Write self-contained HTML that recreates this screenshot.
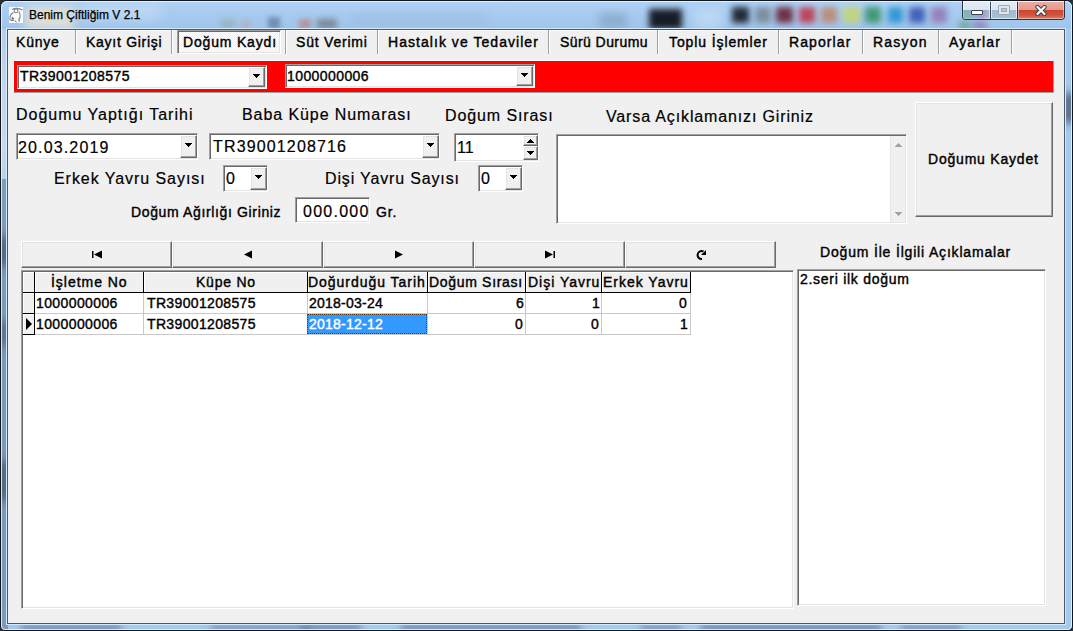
<!DOCTYPE html>
<html><head><meta charset="utf-8">
<style>
*{margin:0;padding:0;box-sizing:border-box}
html,body{width:1073px;height:631px;overflow:hidden;background:#2a3038}
body{position:relative;font-family:"Liberation Sans",sans-serif;color:#000}
.a{position:absolute}
.b14{font-size:14px;line-height:14px;white-space:nowrap;font-weight:normal;-webkit-text-stroke:.4px currentColor}
.r16{font-size:16px;line-height:16px;letter-spacing:1px;white-space:nowrap;-webkit-text-stroke:.2px #000}
.sunk{background:#fff;border:1px solid;border-color:#a0a0a0 #fff #fff #a0a0a0;box-shadow:inset 1px 1px 0 #696969,inset -1px -1px 0 #e3e3e3}
.btn{background:#f0f0f0;border:1px solid;border-color:#fff #696969 #696969 #fff;box-shadow:inset -1px -1px 0 #a0a0a0,inset 1px 1px 0 #e3e3e3}
.sep{width:2px;height:24px;top:30px;border-left:1px solid #a0a0a0;border-right:1px solid #fff}
</style></head><body>

<div class="a" style="left:0;top:0;width:1073px;height:631px;border-radius:7px 7px 5px 5px;overflow:hidden;background:#a6c8ec;border:1px solid #10161e">
<div class="a" style="left:0;top:0;width:1071px;height:28px;background:linear-gradient(#b0d2f4 0,#aacdf2 30%,#9fc4ea 100%)"></div>
<div class="a" style="left:0;top:176px;width:7px;height:460px;background:linear-gradient(#7e9cbc,#7a98b8 50%,#7d9aba)"></div>
<div class="a" style="left:0;top:28px;width:7px;height:150px;background:linear-gradient(#b4cfe8,#c4d6e8 40%,#c8d8e8 80%,#b8d0ea)"></div>
<div class="a" style="left:0;top:235px;width:7px;height:30px;background:#3a4656;filter:blur(5px)"></div>
<div class="a" style="left:0;top:320px;width:7px;height:25px;background:#4a5a6c;filter:blur(5px)"></div>
<div class="a" style="left:0;top:460px;width:7px;height:40px;background:#3a4656;filter:blur(5px)"></div>
<div class="a" style="left:20px;top:624px;width:100px;height:6px;background:#5c7896;filter:blur(3px);opacity:.8"></div>
<div class="a" style="left:210px;top:624px;width:100px;height:6px;background:#6a86a4;filter:blur(3px);opacity:.8"></div>
<div class="a" style="left:300px;top:624px;width:60px;height:6px;background:#5c7896;filter:blur(3px);opacity:.8"></div>
<div class="a" style="left:400px;top:624px;width:180px;height:6px;background:#5a7492;filter:blur(3px);opacity:.8"></div>
<div class="a" style="left:640px;top:624px;width:40px;height:6px;background:#6a86a4;filter:blur(3px);opacity:.8"></div>
<div class="a" style="left:700px;top:624px;width:180px;height:6px;background:#56708e;filter:blur(3px);opacity:.8"></div>
<div class="a" style="left:900px;top:624px;width:60px;height:6px;background:#6a86a4;filter:blur(3px);opacity:.8"></div>
<div class="a" style="left:1064px;top:92px;width:8px;height:30px;background:#3a4656;filter:blur(4px)"></div>
<div class="a" style="left:24px;top:5px;width:50px;height:24px;background:#e0e0d6;filter:blur(5px);opacity:0.95"></div>
<div class="a" style="left:80px;top:4px;width:80px;height:14px;background:#c8def4;filter:blur(6px);opacity:0.7"></div>
<div class="a" style="left:220px;top:18px;width:14px;height:10px;background:#90a8a0;filter:blur(3px);opacity:0.6"></div>
<div class="a" style="left:240px;top:20px;width:10px;height:8px;background:#c09a9a;filter:blur(3px);opacity:0.5"></div>
<div class="a" style="left:267px;top:16px;width:12px;height:12px;background:#48607e;filter:blur(2.5px);opacity:0.55"></div>
<div class="a" style="left:298px;top:18px;width:12px;height:10px;background:#c06850;filter:blur(2.5px);opacity:0.5"></div>
<div class="a" style="left:316px;top:18px;width:20px;height:10px;background:#5a5650;filter:blur(3px);opacity:0.55"></div>
<div class="a" style="left:350px;top:12px;width:136px;height:14px;background:#9cbce0;filter:blur(3px);opacity:0.5"></div>
<div class="a" style="left:598px;top:12px;width:28px;height:16px;background:#86a4c4;filter:blur(4px);opacity:0.7"></div>
<div class="a" style="left:648px;top:8px;width:33px;height:20px;background:#10141c;filter:blur(3px);opacity:0.95"></div>
<div class="a" style="left:693px;top:8px;width:28px;height:20px;background:#c8e0f8;filter:blur(4px);opacity:0.6"></div>
<div class="a" style="left:731px;top:6px;width:17px;height:16px;background:#141a24;filter:blur(3px);opacity:0.9"></div>
<div class="a" style="left:754px;top:6px;width:16px;height:16px;background:#7a8898;filter:blur(3px);opacity:0.9"></div>
<div class="a" style="left:775px;top:6px;width:17px;height:16px;background:#6a2030;filter:blur(3px);opacity:0.9"></div>
<div class="a" style="left:798px;top:6px;width:16px;height:16px;background:#c03040;filter:blur(3px);opacity:0.85"></div>
<div class="a" style="left:820px;top:6px;width:16px;height:16px;background:#c08060;filter:blur(3px);opacity:0.8"></div>
<div class="a" style="left:842px;top:6px;width:17px;height:16px;background:#c8d860;filter:blur(3px);opacity:0.8"></div>
<div class="a" style="left:864px;top:6px;width:16px;height:16px;background:#309060;filter:blur(3px);opacity:0.85"></div>
<div class="a" style="left:887px;top:6px;width:15px;height:16px;background:#2090d0;filter:blur(3px);opacity:0.85"></div>
<div class="a" style="left:908px;top:6px;width:16px;height:16px;background:#3050b0;filter:blur(3px);opacity:0.85"></div>
<div class="a" style="left:930px;top:6px;width:16px;height:16px;background:#9070b0;filter:blur(3px);opacity:0.8"></div>
<div class="a" style="left:958px;top:20px;width:12px;height:10px;background:#60a080;filter:blur(3px);opacity:0.7"></div>
<div class="a" style="left:972px;top:20px;width:14px;height:10px;background:#9070b0;filter:blur(3px);opacity:0.7"></div>
<div class="a" style="left:0;top:0;width:1071px;height:629px;border-radius:6px 6px 4px 4px;border:1px solid rgba(235,246,255,.85)"></div>
</div>
<div class="a" style="left:6px;top:28px;width:1060px;height:597px;border:1px solid #d6eaff"></div>
<div class="a" style="left:7px;top:29px;width:1058px;height:595px;background:#f0f0f0;border:1px solid #4a5868"></div>
<div class="a" style="left:8px;top:30px;width:1056px;height:1px;background:#fafafa"></div>
<svg class="a" style="left:9px;top:7px" width="14" height="16" viewBox="0 0 14 16">
<rect width="14" height="16" fill="#fbfbfb"/>
<g fill="none" stroke="#858585" stroke-width="1.1">
<path d="M3,2.5 Q8,0 13.5,3"/><circle cx="7" cy="3.8" r="1.9"/>
<path d="M4.5,5.5 Q0.5,7.5 1,12.5 Q2.5,14.5 5,13 M10,4.5 Q12,8 10.5,12 L10,15 M6,13.5 L7.5,15.5"/>
</g><path d="M3,9.5 L5.5,12 L2.5,13 Z" fill="#707070"/><path d="M9,11 L11,12.5 L10,15 Z" fill="#9a9a9a"/></svg>
<div class="a" style="left:29px;top:9px;font-size:12px;line-height:12px;color:#000;white-space:nowrap;-webkit-text-stroke:.25px #000">Benim Çiftliğim V 2.1</div>
<div class="a" style="left:962px;top:0;width:103px;height:20px;border:1px solid #2a3646;border-top:none;border-radius:0 0 4px 4px;overflow:hidden">
<div class="a" style="left:0;top:0;width:27px;height:19px;background:linear-gradient(#e6eef6 0,#dae5f0 50%,#a7bad0 52%,#aec1d6 100%);box-shadow:inset 0 0 0 1px rgba(255,255,255,.6)"></div>
<div class="a" style="left:0;top:10px;width:27px;height:9px;background:linear-gradient(90deg,rgba(90,170,120,.45),rgba(80,140,200,.3) 45%,rgba(160,110,190,.45) 70%,rgba(0,0,0,0))"></div>
<div class="a" style="left:27px;top:0;width:1px;height:19px;background:#3a4656"></div>
<div class="a" style="left:28px;top:0;width:26px;height:19px;background:linear-gradient(#e6eef6 0,#dae5f0 50%,#a3b7cd 52%,#abbfd5 100%);box-shadow:inset 0 0 0 1px rgba(255,255,255,.6)"></div>
<div class="a" style="left:54px;top:0;width:1px;height:19px;background:#5a2418"></div>
<div class="a" style="left:55px;top:0;width:46px;height:19px;background:linear-gradient(#eeb0a6 0,#e49a8e 50%,#c9452f 52%,#d0553e 80%,#d98068 100%);box-shadow:inset 0 0 0 1px rgba(255,230,225,.5)"></div>
<div class="a" style="left:8px;top:10px;width:12px;height:5px;background:#fff;border:1px solid #3a4252;border-radius:1px"></div>
<div class="a" style="left:35px;top:5px;width:12px;height:10px;border:1px solid #9ca8b8;border-radius:1px;box-shadow:inset 0 0 0 2px #dfe5ec"></div>
<div class="a" style="left:38px;top:8px;width:6px;height:4px;border:1px solid #9ca8b8;background:#b4c4d6"></div>
<svg class="a" style="left:72px;top:5px" width="12" height="11" viewBox="0 0 12 11"><path d="M2.5,2 L9.5,9 M9.5,2 L2.5,9" stroke="#384050" stroke-width="4.2" stroke-linecap="round"/><path d="M2.5,2 L9.5,9 M9.5,2 L2.5,9" stroke="#fafafa" stroke-width="2.3" stroke-linecap="round"/></svg>
</div>
<div class="a" style="left:955px;top:0;width:110px;height:1px;background:#10161e"></div>
<div class="a" style="left:963px;top:1px;width:101px;height:1px;background:rgba(255,255,255,.75)"></div>
<div class="a sep" style="left:75px"></div>
<div class="a sep" style="left:171px"></div>
<div class="a sep" style="left:285px"></div>
<div class="a sep" style="left:377px"></div>
<div class="a sep" style="left:548px"></div>
<div class="a sep" style="left:657px"></div>
<div class="a sep" style="left:778px"></div>
<div class="a sep" style="left:862px"></div>
<div class="a sep" style="left:938px"></div>
<div class="a sep" style="left:1011px"></div>
<div class="a" style="left:177px;top:30px;width:104px;height:24px;border:1px solid;border-color:#a0a0a0 #fff #fff #a0a0a0;box-shadow:inset 1px 1px 0 #696969,inset -1px -1px 0 #e3e3e3;background:repeating-conic-gradient(#fff 0 25%,#f0f0f0 0 50%) 0 0/2px 2px"></div>
<div class="a" style="left:13px;top:60px;width:1041px;height:33px;background:#f00;border:1px solid;border-color:#fff #a0a0a0 #a0a0a0 #fff"></div>
<div class="a sunk" style="left:17px;top:65px;width:250px;height:24px"></div>
<div class="a btn" style="left:248px;top:67px;width:17px;height:20px"></div>
<div class="a" style="left:253px;top:74px;width:7px;height:1px;background:#000"></div>
<div class="a" style="left:254px;top:75px;width:5px;height:1px;background:#000"></div>
<div class="a" style="left:255px;top:76px;width:3px;height:1px;background:#000"></div>
<div class="a" style="left:256px;top:77px;width:1px;height:1px;background:#000"></div>
<div class="a sunk" style="left:285px;top:64px;width:250px;height:24px"></div>
<div class="a btn" style="left:516px;top:66px;width:17px;height:20px"></div>
<div class="a" style="left:521px;top:73px;width:7px;height:1px;background:#000"></div>
<div class="a" style="left:522px;top:74px;width:5px;height:1px;background:#000"></div>
<div class="a" style="left:523px;top:75px;width:3px;height:1px;background:#000"></div>
<div class="a" style="left:524px;top:76px;width:1px;height:1px;background:#000"></div>
<div class="a sunk" style="left:16px;top:133px;width:182px;height:27px"></div>
<div class="a btn" style="left:180px;top:135px;width:17px;height:23px"></div>
<div class="a" style="left:185px;top:143px;width:7px;height:1px;background:#000"></div>
<div class="a" style="left:186px;top:144px;width:5px;height:1px;background:#000"></div>
<div class="a" style="left:187px;top:145px;width:3px;height:1px;background:#000"></div>
<div class="a" style="left:188px;top:146px;width:1px;height:1px;background:#000"></div>
<div class="a sunk" style="left:209px;top:133px;width:231px;height:27px"></div>
<div class="a btn" style="left:422px;top:135px;width:17px;height:23px"></div>
<div class="a" style="left:427px;top:143px;width:7px;height:1px;background:#000"></div>
<div class="a" style="left:428px;top:144px;width:5px;height:1px;background:#000"></div>
<div class="a" style="left:429px;top:145px;width:3px;height:1px;background:#000"></div>
<div class="a" style="left:430px;top:146px;width:1px;height:1px;background:#000"></div>
<div class="a sunk" style="left:454px;top:133px;width:85px;height:29px"></div>
<div class="a btn" style="left:523px;top:135px;width:15px;height:11px"></div>
<div class="a btn" style="left:523px;top:146px;width:15px;height:14px"></div>
<div class="a" style="left:527px;top:142px;width:7px;height:1px;background:#000"></div>
<div class="a" style="left:528px;top:141px;width:5px;height:1px;background:#000"></div>
<div class="a" style="left:529px;top:140px;width:3px;height:1px;background:#000"></div>
<div class="a" style="left:530px;top:139px;width:1px;height:1px;background:#000"></div>
<div class="a" style="left:527px;top:151px;width:7px;height:1px;background:#000"></div>
<div class="a" style="left:528px;top:152px;width:5px;height:1px;background:#000"></div>
<div class="a" style="left:529px;top:153px;width:3px;height:1px;background:#000"></div>
<div class="a" style="left:530px;top:154px;width:1px;height:1px;background:#000"></div>
<div class="a sunk" style="left:556px;top:134px;width:351px;height:90px"></div>
<div class="a" style="left:890px;top:136px;width:16px;height:86px;background:#f0f0f0;border-left:1px solid #e6e6e6;border-right:1px solid #e6e6e6"></div>
<div class="a" style="left:895px;top:146px;width:7px;height:1px;background:#a3a3a3"></div>
<div class="a" style="left:896px;top:145px;width:5px;height:1px;background:#a3a3a3"></div>
<div class="a" style="left:897px;top:144px;width:3px;height:1px;background:#a3a3a3"></div>
<div class="a" style="left:898px;top:143px;width:1px;height:1px;background:#a3a3a3"></div>
<div class="a" style="left:895px;top:212px;width:7px;height:1px;background:#a3a3a3"></div>
<div class="a" style="left:896px;top:213px;width:5px;height:1px;background:#a3a3a3"></div>
<div class="a" style="left:897px;top:214px;width:3px;height:1px;background:#a3a3a3"></div>
<div class="a" style="left:898px;top:215px;width:1px;height:1px;background:#a3a3a3"></div>
<div class="a btn" style="left:915px;top:102px;width:138px;height:115px"></div>
<div class="a sunk" style="left:223px;top:165px;width:45px;height:27px"></div>
<div class="a btn" style="left:250px;top:167px;width:17px;height:23px"></div>
<div class="a" style="left:255px;top:175px;width:7px;height:1px;background:#000"></div>
<div class="a" style="left:256px;top:176px;width:5px;height:1px;background:#000"></div>
<div class="a" style="left:257px;top:177px;width:3px;height:1px;background:#000"></div>
<div class="a" style="left:258px;top:178px;width:1px;height:1px;background:#000"></div>
<div class="a sunk" style="left:478px;top:165px;width:45px;height:27px"></div>
<div class="a btn" style="left:505px;top:167px;width:17px;height:23px"></div>
<div class="a" style="left:510px;top:175px;width:7px;height:1px;background:#000"></div>
<div class="a" style="left:511px;top:176px;width:5px;height:1px;background:#000"></div>
<div class="a" style="left:512px;top:177px;width:3px;height:1px;background:#000"></div>
<div class="a" style="left:513px;top:178px;width:1px;height:1px;background:#000"></div>
<div class="a sunk" style="left:295px;top:197px;width:75px;height:26px"></div>
<div class="a btn" style="left:21px;top:241px;width:151px;height:27px"></div>
<div class="a btn" style="left:172px;top:241px;width:151px;height:27px"></div>
<div class="a btn" style="left:323px;top:241px;width:151px;height:27px"></div>
<div class="a btn" style="left:474px;top:241px;width:151px;height:27px"></div>
<div class="a btn" style="left:625px;top:241px;width:151px;height:27px"></div>
<svg class="a" style="left:0;top:0" width="1073" height="631" viewBox="0 0 1073 631">
<rect x="92" y="251" width="1.5" height="7" fill="#000"/><polygon points="94,254.5 102,250.5 102,258.5" fill="#000"/>
<polygon points="244,254.5 252,250.5 252,258.5" fill="#000"/>
<polygon points="403,254.5 395,250.5 395,258.5" fill="#000"/>
<rect x="553.5" y="251" width="1.5" height="7" fill="#000"/><polygon points="553,254.5 545,250.5 545,258.5" fill="#000"/>
<path d="M702,259 A4,4 0 1 1 703.5,251.5" fill="none" stroke="#000" stroke-width="2"/>
<polygon points="706,250 706,255 701,255" fill="#000"/>
</svg>
<div class="a sunk" style="left:21px;top:270px;width:773px;height:339px"></div>
<div class="a" style="left:23px;top:272px;width:12px;height:21px;background:#f0f0f0;border-right:1px solid #000;border-bottom:1px solid #000;box-shadow:inset 1px 1px 0 #fff"></div>
<div class="a" style="left:35px;top:272px;width:109px;height:21px;background:#f0f0f0;border-right:1px solid #000;border-bottom:1px solid #000;box-shadow:inset 1px 1px 0 #fff"></div>
<div class="a" style="left:144px;top:272px;width:164px;height:21px;background:#f0f0f0;border-right:1px solid #000;border-bottom:1px solid #000;box-shadow:inset 1px 1px 0 #fff"></div>
<div class="a" style="left:308px;top:272px;width:120px;height:21px;background:#f0f0f0;border-right:1px solid #000;border-bottom:1px solid #000;box-shadow:inset 1px 1px 0 #fff"></div>
<div class="a" style="left:428px;top:272px;width:98px;height:21px;background:#f0f0f0;border-right:1px solid #000;border-bottom:1px solid #000;box-shadow:inset 1px 1px 0 #fff"></div>
<div class="a" style="left:526px;top:272px;width:76px;height:21px;background:#f0f0f0;border-right:1px solid #000;border-bottom:1px solid #000;box-shadow:inset 1px 1px 0 #fff"></div>
<div class="a" style="left:602px;top:272px;width:89px;height:21px;background:#f0f0f0;border-right:1px solid #000;border-bottom:1px solid #000;box-shadow:inset 1px 1px 0 #fff"></div>
<div class="a" style="left:23px;top:293px;width:12px;height:21px;background:#f0f0f0;border-right:1px solid #000;border-bottom:1px solid #000;box-shadow:inset 1px 1px 0 #fff"></div>
<div class="a" style="left:35px;top:293px;width:109px;height:21px;background:#fff;border-right:1px solid #c8c8c8;border-bottom:1px solid #c8c8c8"></div>
<div class="a" style="left:144px;top:293px;width:164px;height:21px;background:#fff;border-right:1px solid #c8c8c8;border-bottom:1px solid #c8c8c8"></div>
<div class="a" style="left:308px;top:293px;width:120px;height:21px;background:#fff;border-right:1px solid #c8c8c8;border-bottom:1px solid #c8c8c8"></div>
<div class="a" style="left:428px;top:293px;width:98px;height:21px;background:#fff;border-right:1px solid #c8c8c8;border-bottom:1px solid #c8c8c8"></div>
<div class="a" style="left:526px;top:293px;width:76px;height:21px;background:#fff;border-right:1px solid #c8c8c8;border-bottom:1px solid #c8c8c8"></div>
<div class="a" style="left:602px;top:293px;width:89px;height:21px;background:#fff;border-right:1px solid #c8c8c8;border-bottom:1px solid #c8c8c8"></div>
<div class="a" style="left:23px;top:314px;width:12px;height:21px;background:#f0f0f0;border-right:1px solid #000;border-bottom:1px solid #000;box-shadow:inset 1px 1px 0 #fff"></div>
<div class="a" style="left:35px;top:314px;width:109px;height:21px;background:#fff;border-right:1px solid #c8c8c8;border-bottom:1px solid #c8c8c8"></div>
<div class="a" style="left:144px;top:314px;width:164px;height:21px;background:#fff;border-right:1px solid #c8c8c8;border-bottom:1px solid #c8c8c8"></div>
<div class="a" style="left:308px;top:314px;width:120px;height:21px;background:#fff;border-right:1px solid #c8c8c8;border-bottom:1px solid #c8c8c8"></div>
<div class="a" style="left:428px;top:314px;width:98px;height:21px;background:#fff;border-right:1px solid #c8c8c8;border-bottom:1px solid #c8c8c8"></div>
<div class="a" style="left:526px;top:314px;width:76px;height:21px;background:#fff;border-right:1px solid #c8c8c8;border-bottom:1px solid #c8c8c8"></div>
<div class="a" style="left:602px;top:314px;width:89px;height:21px;background:#fff;border-right:1px solid #c8c8c8;border-bottom:1px solid #c8c8c8"></div>
<div class="a" style="left:26px;top:318px;width:0;height:0;border-top:6px solid transparent;border-bottom:6px solid transparent;border-left:6px solid #000"></div>
<div class="a" style="left:307px;top:314px;width:120px;height:20px;background:#3399ff;border:1px dotted #5a3a10"></div>
<div class="a sunk" style="left:797px;top:269px;width:249px;height:337px"></div>
<div class="a b14" style="left:16px;top:35px;letter-spacing:0.8px;">Künye</div>
<div class="a b14" style="left:86px;top:35px;letter-spacing:0.727px;">Kayıt Girişi</div>
<div class="a b14" style="left:183px;top:35px;letter-spacing:0.82px;">Doğum Kaydı</div>
<div class="a b14" style="left:296px;top:35px;letter-spacing:0.789px;">Süt Verimi</div>
<div class="a b14" style="left:388px;top:35px;letter-spacing:1.045px;">Hastalık ve Tedaviler</div>
<div class="a b14" style="left:560px;top:35px;letter-spacing:0.43px;">Sürü Durumu</div>
<div class="a b14" style="left:669px;top:35px;letter-spacing:0.892px;">Toplu İşlemler</div>
<div class="a b14" style="left:789px;top:35px;letter-spacing:1.086px;">Raporlar</div>
<div class="a b14" style="left:873px;top:35px;letter-spacing:1.22px;">Rasyon</div>
<div class="a b14" style="left:949px;top:35px;letter-spacing:1.133px;">Ayarlar</div>
<div class="a b14" style="left:20px;top:69px;letter-spacing:0.433px;">TR39001208575</div>
<div class="a b14" style="left:287px;top:69px;letter-spacing:0.411px;">1000000006</div>
<div class="a b14" style="left:928px;top:152px;letter-spacing:0.792px;">Doğumu Kaydet</div>
<div class="a b14" style="left:131px;top:205px;letter-spacing:0.638px;">Doğum Ağırlığı Giriniz</div>
<div class="a b14" style="left:376px;top:205px;letter-spacing:0.85px;">Gr.</div>
<div class="a b14" style="left:51px;top:275px;letter-spacing:0.967px;">İşletme No</div>
<div class="a b14" style="left:196px;top:275px;letter-spacing:0.767px;">Küpe No</div>
<div class="a b14" style="left:308px;top:275px;letter-spacing:0.964px;">Doğurduğu Tarih</div>
<div class="a b14" style="left:429px;top:275px;letter-spacing:0.682px;">Doğum Sırası</div>
<div class="a b14" style="left:528px;top:275px;letter-spacing:0.989px;">Dişi Yavru</div>
<div class="a b14" style="left:603px;top:275px;letter-spacing:0.99px;">Erkek Yavru</div>
<div class="a b14" style="left:36px;top:296px;letter-spacing:0.389px;">1000000006</div>
<div class="a b14" style="left:147px;top:296px;letter-spacing:0.35px;">TR39001208575</div>
<div class="a b14" style="left:309px;top:296px;letter-spacing:0.233px;">2018-03-24</div>
<div class="a b14" style="left:36px;top:317px;letter-spacing:0.389px;">1000000006</div>
<div class="a b14" style="left:147px;top:317px;letter-spacing:0.35px;">TR39001208575</div>
<div class="a b14" style="left:309px;top:317px;letter-spacing:0.233px;color:#fff;">2018-12-12</div>
<div class="a b14" style="left:820px;top:245px;letter-spacing:0.822px;">Doğum İle İlgili Açıklamalar</div>
<div class="a b14" style="left:800px;top:272px;letter-spacing:0.72px;">2.seri ilk doğum</div>
<div class="a r16" style="left:16px;top:107px;letter-spacing:0.995px;">Doğumu Yaptığı Tarihi</div>
<div class="a r16" style="left:242px;top:107px;letter-spacing:0.918px;">Baba Küpe Numarası</div>
<div class="a r16" style="left:445px;top:108px;letter-spacing:0.9px;">Doğum Sırası</div>
<div class="a r16" style="left:606px;top:109px;letter-spacing:0.86px;">Varsa Açıklamanızı Giriniz</div>
<div class="a r16" style="left:18px;top:140px;letter-spacing:1.144px;">20.03.2019</div>
<div class="a r16" style="left:213px;top:139px;letter-spacing:1.15px;">TR39001208716</div>
<div class="a r16" style="left:457px;top:140px;letter-spacing:0px;">11</div>
<div class="a r16" style="left:54px;top:171px;letter-spacing:0.947px;">Erkek Yavru Sayısı</div>
<div class="a r16" style="left:226px;top:171px;letter-spacing:0px;">0</div>
<div class="a r16" style="left:325px;top:171px;letter-spacing:0.85px;">Dişi Yavru Sayısı</div>
<div class="a r16" style="left:481px;top:171px;letter-spacing:0px;">0</div>
<div class="a r16" style="left:303px;top:204px;letter-spacing:1.267px;">000.000</div>
<div class="a b14" style="left:516px;top:296px">6</div>
<div class="a b14" style="left:592px;top:296px">1</div>
<div class="a b14" style="left:679px;top:296px">0</div>
<div class="a b14" style="left:515px;top:317px">0</div>
<div class="a b14" style="left:591px;top:317px">0</div>
<div class="a b14" style="left:680px;top:317px">1</div>
</body></html>
